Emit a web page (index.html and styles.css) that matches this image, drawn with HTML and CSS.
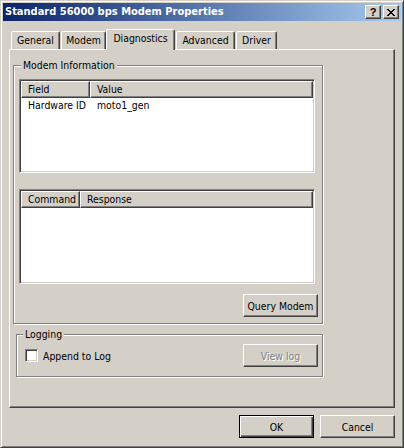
FILE: index.html
```html
<!DOCTYPE html>
<html>
<head>
<meta charset="utf-8">
<link rel="stylesheet" href="styles.css">
</head>
<body>
<div class="window">
  <div class="titlebar">
    <span class="title">Standard 56000 bps Modem Properties</span>
    <div class="caption-btns">
      <button class="cbtn"><span class="help">?</span></button>
      <button class="cbtn">
        <svg width="8" height="7" viewBox="0 0 8 7" shape-rendering="crispEdges">
          <path fill="#000" d="M0 0h2v1h-2zM6 0h2v1h-2zM1 1h2v1h-2zM5 1h2v1h-2zM2 2h4v1h-4zM3 3h2v1h-2zM2 4h4v1h-4zM1 5h2v1h-2zM5 5h2v1h-2zM0 6h2v1h-2zM6 6h2v1h-2z"/>
        </svg>
      </button>
    </div>
  </div>
  <div class="client">
    <div class="tabs">
      <div class="tab t-general">General</div>
      <div class="tab t-modem">Modem</div>
      <div class="tab sel t-diag">Diagnostics</div>
      <div class="tab t-adv">Advanced</div>
      <div class="tab t-driver">Driver</div>
    </div>
    <div class="panel">
      <div class="group g-info">
        <div class="glabel">Modem Information</div>
        <div class="listview lv1">
          <div class="lv-head">
            <div class="hcell col-field">Field</div>
            <div class="hcell col-fill">Value</div>
          </div>
          <div class="lv-row">
            <div class="cell col-field">Hardware ID</div>
            <div class="cell col-fill">moto1_gen</div>
          </div>
        </div>
        <div class="listview lv2">
          <div class="lv-head">
            <div class="hcell col-cmd">Command</div>
            <div class="hcell col-fill">Response</div>
          </div>
        </div>
        <div class="btn-row">
          <button class="btn">Query Modem</button>
        </div>
      </div>
      <div class="group g-log">
        <div class="glabel">Logging</div>
        <div class="log-row">
          <label class="check"><span class="box"></span><span>Append to Log</span></label>
          <button class="btn disabled">View log</button>
        </div>
      </div>
    </div>
    <div class="dlg-btns">
      <button class="btn default">OK</button>
      <button class="btn">Cancel</button>
    </div>
  </div>
</div>
</body>
</html>
```
FILE: styles.css
```css
* { box-sizing: border-box; }
html, body { margin: 0; padding: 0; }
body {
  background: #D4D0C8;
  font-family: "DejaVu Sans Condensed", "DejaVu Sans", sans-serif;
  font-stretch: condensed;
  font-size: 10.4px;
  color: #000;
}
.window {
  width: 404px;
  height: 448px;
  border: 1px solid;
  border-color: #D4D0C8 #404040 #404040 #D4D0C8;
  box-shadow: inset 1px 1px #fff, inset -1px -1px #808080;
  padding: 2px;
  display: flex;
  flex-direction: column;
  background: #D4D0C8;
}
.titlebar {
  flex: none;
  height: 18px;
  background: linear-gradient(to right, #0A246A, #A6CAF0);
  display: flex;
  align-items: center;
  padding: 0 2px 0 2px;
}
.title {
  flex: 1;
  color: #fff;
  font-weight: bold;
  font-size: 11px;
  white-space: nowrap;
  line-height: 18px;
}
.caption-btns { display: flex; gap: 2px; }
.cbtn {
  width: 16px;
  height: 14px;
  padding: 0;
  margin: 0;
  border: 1px solid;
  border-color: #fff #404040 #404040 #fff;
  box-shadow: inset -1px -1px #808080;
  background: #D4D0C8;
  display: flex;
  align-items: center;
  justify-content: center;
}
.help {
  font-family: "Liberation Sans", sans-serif;
  font-weight: bold;
  font-size: 11px;
  line-height: 11px;
  color: #000;
}
.client {
  flex: 1;
  display: flex;
  flex-direction: column;
  padding: 8px 6px 0 6px;
}
.tabs {
  flex: none;
  display: flex;
  align-items: flex-end;
  height: 20px;
  padding-left: 2px;
}
.tab {
  height: 18px;
  border: 1px solid;
  border-bottom: none;
  border-color: #fff #404040 transparent #fff;
  border-radius: 2px 2px 0 0;
  box-shadow: inset -1px 0 #808080;
  background: #D4D0C8;
  text-align: center;
  line-height: 17px;
  white-space: nowrap;
}
.tab.sel {
  height: 21px;
  margin-bottom: -1px;
  line-height: 16px;
  position: relative;
  z-index: 1;
}
.t-general { width: 49px; margin-right: 1px; }
.t-modem { width: 45px; }
.t-diag { width: 69px; }
.t-adv { width: 59px; margin-left: 1px; }
.t-driver { width: 41px; margin-left: 1px; }
.panel {
  flex: none;
  height: 359px;
  border: 1px solid;
  border-color: #fff #404040 #404040 #fff;
  box-shadow: inset -1px -1px #808080;
  display: flex;
  flex-direction: column;
}
.group {
  flex: none;
  border: 1px solid #808080;
  box-shadow: inset 1px 1px #fff, 1px 1px #fff;
}
.glabel {
  width: fit-content;
  height: 13px;
  line-height: 13px;
  margin: -7px 0 0 7px;
  padding: 0 2px;
  background: #D4D0C8;
  white-space: nowrap;
}
.g-info {
  margin: 15px 0 0 3px;
  width: 310px;
  height: 259px;
}
.g-log {
  margin: 10px 0 0 6px;
  width: 307px;
  height: 43px;
}
.g-log .glabel { margin-left: 6px; }
.listview {
  width: 296px;
  margin-left: 5px;
  border: 1px solid;
  border-color: #808080 #fff #fff #808080;
  box-shadow: inset 1px 1px #404040, inset -1px -1px #D4D0C8;
  padding: 1px;
  background: #fff;
}
.lv1 { margin-top: 7px; height: 94px; }
.lv2 { margin-top: 16px; height: 95px; }
.lv-head {
  display: flex;
  height: 17px;
  background: #D4D0C8;
}
.hcell {
  height: 17px;
  border: 1px solid;
  border-color: #fff #404040 #404040 #fff;
  box-shadow: inset -1px -1px #808080;
  padding-left: 6px;
  line-height: 15px;
  white-space: nowrap;
}
.col-field { width: 69px; flex: none; }
.col-cmd { width: 59px; flex: none; }
.col-fill { flex: 1; }
.lv-row {
  display: flex;
  height: 15px;
  line-height: 15px;
}
.cell { padding-left: 7px; white-space: nowrap; }
.btn-row {
  display: flex;
  justify-content: flex-end;
  margin: 10px 4px 0 0;
}
.btn {
  width: 75px;
  height: 23px;
  padding: 0;
  margin: 0;
  font: inherit;
  color: #000;
  background: #D4D0C8;
  border: 1px solid;
  border-color: #fff #404040 #404040 #fff;
  box-shadow: inset -1px -1px #808080;
}
.btn.default {
  border-color: #000;
  box-shadow: inset 1px 1px #fff, inset -1px -1px #404040, inset -2px -2px #808080;
}
.btn.disabled {
  color: #808080;
  text-shadow: 1px 1px #fff;
}
.log-row {
  display: flex;
  align-items: center;
  justify-content: space-between;
  height: 23px;
  margin: 3px 4px 0 8px;
}
.check {
  display: flex;
  align-items: center;
  gap: 5px;
}
.box {
  width: 13px;
  height: 13px;
  border: 1px solid;
  border-color: #808080 #fff #fff #808080;
  box-shadow: inset 1px 1px #404040, inset -1px -1px #D4D0C8;
  background: #fff;
}
.dlg-btns {
  display: flex;
  justify-content: flex-end;
  gap: 6px;
  margin-top: 7px;
}
```
